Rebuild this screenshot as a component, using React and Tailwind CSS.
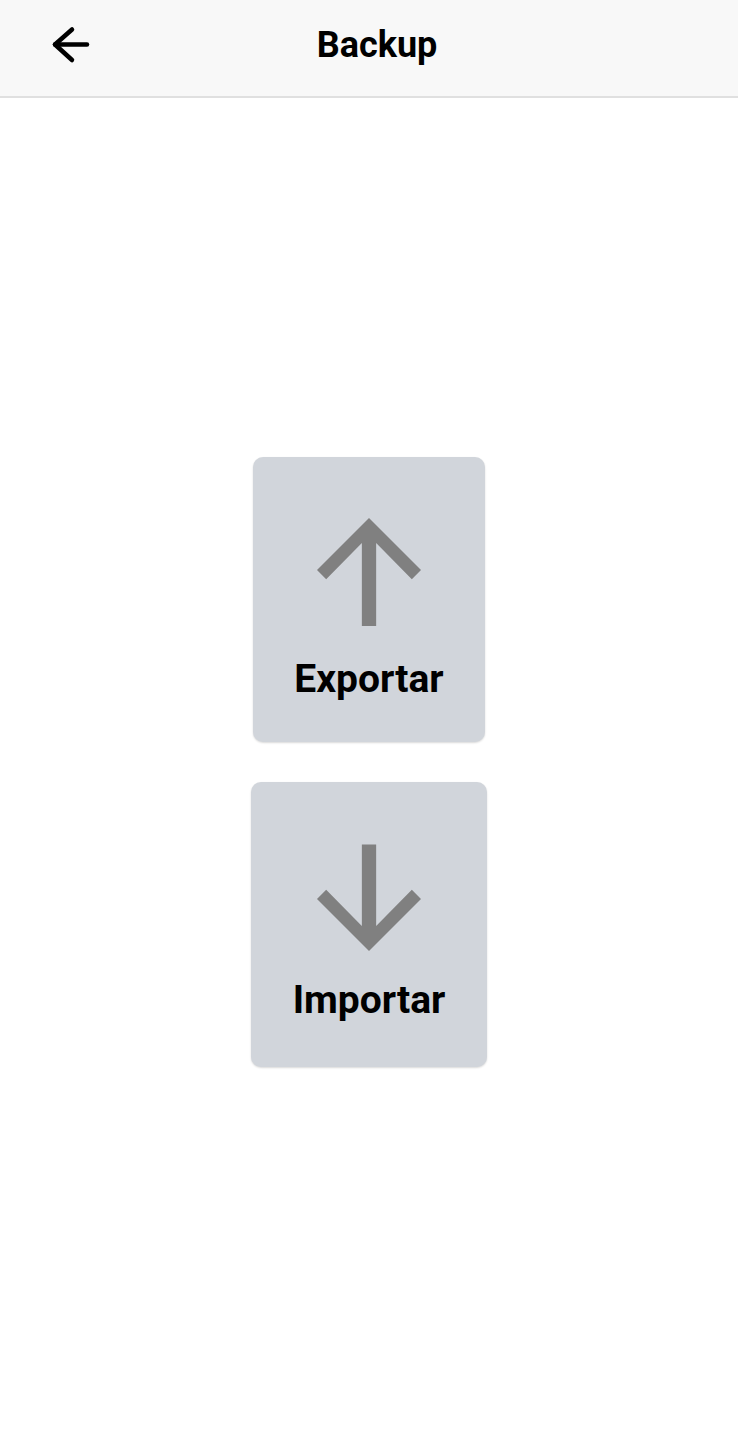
import React from "react";

function ArrowUp() {
  return (
    <svg viewBox="0 0 24 24" className="w-[156px] h-[156px]" fill="#808080">
      <path d="M4 12l1.41 1.41L10.9 7.83V20.6h2.2V7.83l5.49 5.59L20 12l-8-8-8 8z" />
    </svg>
  );
}

function ArrowDown() {
  return (
    <svg viewBox="0 0 24 24" className="w-[156px] h-[156px]" fill="#808080">
      <path d="M20 12l-1.41-1.41L13.1 16.17V3.6h-2.2v12.57l-5.49-5.59L4 12l8 8 8-8z" />
    </svg>
  );
}

function Card({ icon, label, boxClass, labelClass }) {
  return (
    <button className={`flex flex-col items-center bg-[#d1d5db] rounded-[10px] h-[285px] shadow-[0_1px_2px_rgba(0,0,0,0.15)] ${boxClass}`}>
      {icon}
      <span className={`text-[39px] font-bold text-black leading-[46px] ${labelClass}`}>
        {label}
      </span>
    </button>
  );
}

export default function App() {
  return (
    <div className="w-[738px] min-h-[1451px] bg-white" style={{ fontFamily: "Roboto, 'Noto Sans', sans-serif" }}>
      <header className="h-[98px] bg-[#f8f8f8] border-b-2 border-[#e0e0e0] flex items-center relative">
        <button className="absolute left-[50px] top-[25px] w-[40px] h-[40px]">
          <svg viewBox="0 0 40 40" className="w-[40px] h-[40px]" fill="none" stroke="#000" strokeWidth="4.5" strokeLinecap="round" strokeLinejoin="round">
            <path d="M22 4.5 5 19.5 22 35" />
            <path d="M5 19.5h32" />
          </svg>
        </button>
        <h1 className="w-full text-center text-[36px] font-bold text-black leading-[42px] pl-[16px] -mt-[6px]">Backup</h1>
      </header>
      <main className="flex flex-col items-center gap-[40px] pt-[359px]">
        <Card icon={<ArrowUp />} label="Exportar" boxClass="w-[232px] pt-[35px]" labelClass="mt-[8px]" />
        <Card icon={<ArrowDown />} label="Importar" boxClass="w-[236px] pt-[39px]" labelClass="mt-0" />
      </main>
    </div>
  );
}
